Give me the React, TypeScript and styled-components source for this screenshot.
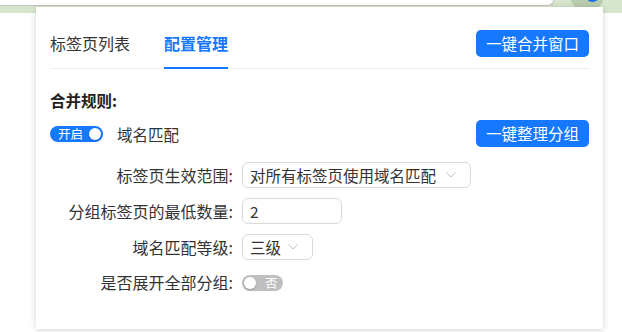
import React from 'react';
import styled, { createGlobalStyle } from 'styled-components';

const GlobalStyle = createGlobalStyle`
  body {
    margin: 0;
    background: #fff;
    font-family: "Noto Sans CJK SC", "Noto Sans", "Liberation Sans", sans-serif;
  }
`;

const Page = styled.div`
  width: 622px;
  height: 332px;
  overflow: hidden;
  background: #fff;
`;

const ChromeBar = styled.div`
  height: 13px;
  background: #d6e5cb;
  display: flex;
  overflow: hidden;
`;

const AddressBar = styled.div`
  width: 553px;
  height: 5px;
  flex-shrink: 0;
  background: #fff;
  border-bottom: 1px solid #c4c4c4;
  border-right: 1px solid #c4c4c4;
  border-bottom-right-radius: 10px;
`;

const ProfileButton = styled.div`
  margin: -22px 0 0 16px;
  width: 34px;
  height: 34px;
  flex-shrink: 0;
  border-radius: 50%;
  background: #b9ccae;
  display: flex;
  padding: 9px 0 0 15px;
  box-sizing: border-box;
`;

const ProfileDot = styled.div`
  width: 15px;
  height: 15px;
  border-radius: 50%;
  background: #1a73e8;
`;

const Panel = styled.div`
  position: relative;
  margin: -6px 0 0 36px;
  width: 567px;
  box-sizing: border-box;
  padding: 12px 14px 35px;
  background: #fff;
  box-shadow: 0 1px 6px rgba(0, 0, 0, 0.18);
`;

const Header = styled.div`
  display: flex;
  align-items: center;
  justify-content: space-between;
  height: 50px;
  box-sizing: border-box;
  border-bottom: 1px solid #f0f0f0;
`;

const Tabs = styled.div`
  display: flex;
  gap: 34px;
  align-self: flex-start;
`;

const Tab = styled.div<{ $active?: boolean }>`
  font-size: 16px;
  line-height: 24px;
  padding: 12px 0;
  color: ${p => (p.$active ? '#1677ff' : '#333')};
  font-weight: ${p => (p.$active ? 700 : 400)};
  border-bottom: 2px solid ${p => (p.$active ? '#1677ff' : 'transparent')};
`;

const PrimaryButton = styled.button`
  height: 27px;
  padding: 0 10px;
  border: none;
  border-radius: 5px;
  background: #1677ff;
  color: #fff;
  font-family: inherit;
  font-size: 15.5px;
  line-height: 27px;
  cursor: pointer;
`;

const SectionTitle = styled.div`
  margin-top: 20px;
  font-size: 15.5px;
  line-height: 22px;
  font-weight: 700;
  color: #222;
`;

const RuleRow = styled.div`
  margin-top: 9px;
  height: 27px;
  display: flex;
  align-items: center;
  justify-content: space-between;
`;

const RuleLeft = styled.div`
  display: flex;
  align-items: center;
  gap: 14px;
  font-size: 15.5px;
  color: #333;
`;

const Switch = styled.div<{ $on?: boolean }>`
  display: inline-flex;
  align-items: center;
  flex-direction: ${p => (p.$on ? 'row' : 'row-reverse')};
  justify-content: flex-end;
  height: 16px;
  box-sizing: border-box;
  border-radius: 8px;
  padding: ${p => (p.$on ? '0 2px 0 8px' : '0 5px 0 2px')};
  gap: ${p => (p.$on ? '6px' : '9px')};
  background: ${p => (p.$on ? '#1677ff' : '#bfbfbf')};
`;

const SwitchText = styled.span`
  font-size: 12.5px;
  line-height: 16px;
  color: #fff;
`;

const Knob = styled.span`
  width: 12px;
  height: 12px;
  border-radius: 50%;
  background: #fff;
  box-shadow: 0 1px 2px rgba(0, 0, 0, 0.2);
`;

const Form = styled.div`
  margin-top: 15px;
  display: flex;
  flex-direction: column;
  gap: 10px;
`;

const FormRow = styled.div`
  display: grid;
  grid-template-columns: 192px auto;
  justify-content: start;
  align-items: center;
`;

const Label = styled.div`
  text-align: right;
  padding-right: 9px;
  font-size: 16px;
  line-height: 16px;
  color: #333;
  white-space: nowrap;
  &::after {
    content: ':';
  }
`;

const Select = styled.div<{ $width: number }>`
  width: ${p => p.$width}px;
  height: 26px;
  box-sizing: border-box;
  display: flex;
  align-items: center;
  justify-content: space-between;
  padding: 0 14px 0 7px;
  border: 1px solid #d9d9d9;
  border-radius: 6px;
  font-size: 15.5px;
  color: #333;
`;

const Input = styled.div`
  width: 100px;
  height: 26px;
  box-sizing: border-box;
  display: flex;
  align-items: center;
  padding: 0 7px;
  border: 1px solid #d9d9d9;
  border-radius: 6px;
  font-size: 15.5px;
  color: #333;
`;

const Chevron = () => (
  <svg width="10" height="6" viewBox="0 0 10 6" fill="none">
    <path d="M0.5 0.5 L5 5 L9.5 0.5" stroke="#bfbfbf" strokeWidth="1" />
  </svg>
);

export default function App() {
  return (
    <Page>
      <GlobalStyle />
      <ChromeBar>
        <AddressBar />
        <ProfileButton>
          <ProfileDot />
        </ProfileButton>
      </ChromeBar>
      <Panel>
        <Header>
          <Tabs>
            <Tab>标签页列表</Tab>
            <Tab $active>配置管理</Tab>
          </Tabs>
          <PrimaryButton>一键合并窗口</PrimaryButton>
        </Header>

        <SectionTitle>合并规则:</SectionTitle>
        <RuleRow>
          <RuleLeft>
            <Switch $on>
              <SwitchText>开启</SwitchText>
              <Knob />
            </Switch>
            域名匹配
          </RuleLeft>
          <PrimaryButton>一键整理分组</PrimaryButton>
        </RuleRow>

        <Form>
          <FormRow>
            <Label>标签页生效范围</Label>
            <Select $width={229}>
              对所有标签页使用域名匹配
              <Chevron />
            </Select>
          </FormRow>
          <FormRow>
            <Label>分组标签页的最低数量</Label>
            <Input>2</Input>
          </FormRow>
          <FormRow>
            <Label>域名匹配等级</Label>
            <Select $width={71}>
              三级
              <Chevron />
            </Select>
          </FormRow>
          <FormRow>
            <Label>是否展开全部分组</Label>
            <div>
              <Switch>
                <SwitchText>否</SwitchText>
                <Knob />
              </Switch>
            </div>
          </FormRow>
        </Form>
      </Panel>
    </Page>
  );
}
